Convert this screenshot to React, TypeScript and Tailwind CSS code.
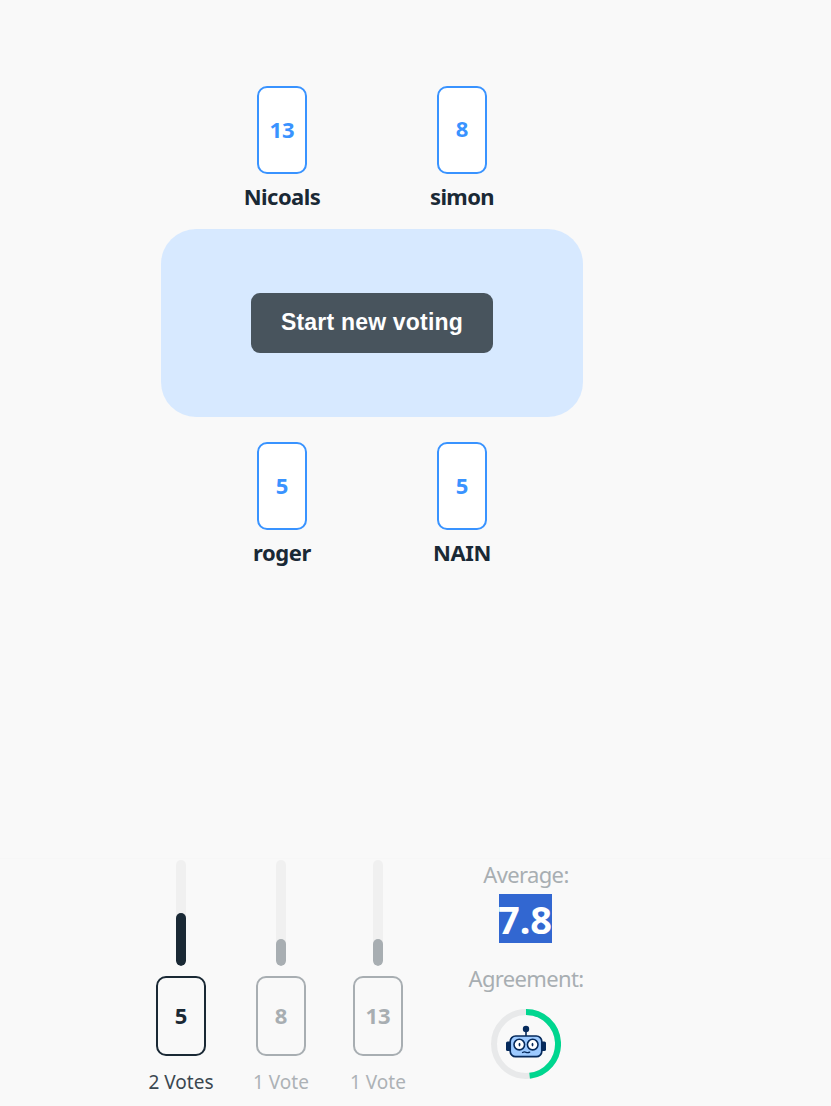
type Player = { name: string; vote: string; nameClass: string; voteClass?: string };
type Result = { vote: string; label: string; fill: string; tone: string; bar: string; width: string; text: string };

const topPlayers: Player[] = [
  { name: "Nicoals", vote: "13", nameClass: "tracking-[-0.55px]" },
  { name: "simon", vote: "8", nameClass: "tracking-[-0.6px]", voteClass: "pb-[4px]" },
];
const bottomPlayers: Player[] = [
  { name: "roger", vote: "5", nameClass: "tracking-[-0.4px]" },
  { name: "NAIN", vote: "5", nameClass: "tracking-[-0.35px]" },
];
const results: Result[] = [
  { vote: "5", label: "2 Votes", fill: "h-[53px]", tone: "border-[#1a2935] text-[#1a2935]", bar: "bg-[#1a2935]", width: "w-[100px]", text: "text-[#3a4750]" },
  { vote: "8", label: "1 Vote", fill: "h-[27px]", tone: "border-[#a8aeb2] text-[#a8aeb2]", bar: "bg-[#a8aeb2]", width: "w-[100px]", text: "text-[#adb2b6]" },
  { vote: "13", label: "1 Vote", fill: "h-[27px]", tone: "border-[#a8aeb2] text-[#a8aeb2]", bar: "bg-[#a8aeb2]", width: "w-[94px]", text: "text-[#adb2b6]" },
];

function PlayerCard({ name, vote, nameClass, voteClass = "pb-[2px]" }: Player) {
  return (
    <div className="flex w-[180px] flex-col items-center">
      <div className="flex h-[88px] w-[50px] items-center justify-center rounded-[10px] border-2 border-[#3993ff] bg-white text-[22px] font-bold text-[#3993ff]">
        <span className={voteClass}>{vote}</span>
      </div>
      <div className={"mt-[7px] mb-px text-[22px] leading-[30px] font-bold whitespace-nowrap text-[#1a2935] " + nameClass}>{name}</div>
    </div>
  );
}

function ResultColumn({ vote, label, fill, tone, bar, width, text }: Result) {
  return (
    <div className={"flex flex-col items-center " + width}>
      <div className="flex h-[106px] w-[10px] items-end overflow-hidden rounded-full bg-[#f0f0f0]">
        <div className={"w-full rounded-full " + fill + " " + bar} />
      </div>
      <div className={"mt-[10px] flex h-[80px] w-[50px] items-center justify-center rounded-[10px] border-2 pb-[2px] text-[22px] font-bold " + tone}>{vote}</div>
      <div className={"mt-[13px] text-[19px] leading-[26px] whitespace-nowrap " + text}>{label}</div>
    </div>
  );
}

function AgreementRing() {
  return (
    <svg className="mt-[16px] h-[70px] w-[70px] shrink-0" viewBox="0 0 70 70" fill="none">
      <circle cx="35" cy="35" r="32" stroke="#e8e9ea" strokeWidth="6" />
      <path d="M35 3A32 32 0 0 1 38.6 66.8" stroke="#00d68f" strokeWidth="6" />
      <path d="M35 21v6" stroke="#062a5c" strokeWidth="1.6" />
      <circle cx="35" cy="20" r="3.2" fill="#062a5c" />
      <rect x="15" y="32.5" width="5" height="9.5" rx="1.6" fill="#062a5c" />
      <rect x="50" y="32.5" width="5" height="9.5" rx="1.6" fill="#062a5c" />
      <rect x="19.2" y="27" width="31.6" height="20.7" rx="5.5" fill="#9dcaff" stroke="#062a5c" strokeWidth="1.7" />
      <circle cx="28.3" cy="35.6" r="5.3" fill="#fff" stroke="#062a5c" strokeWidth="1.6" />
      <circle cx="41.7" cy="35.6" r="5.3" fill="#fff" stroke="#062a5c" strokeWidth="1.6" />
      <ellipse cx="28.5" cy="35.6" rx="0.9" ry="1.9" fill="#062a5c" />
      <ellipse cx="41.5" cy="35.6" rx="0.9" ry="1.9" fill="#062a5c" />
      <path d="M31.5 43.5q1.8-1 3.6-.2t3.6-.2" stroke="#062a5c" strokeWidth="1.3" strokeLinecap="round" />
    </svg>
  );
}

export default function App() {
  return (
    <div className="flex h-[1106px] w-[831px] flex-col overflow-hidden bg-[#f9f9f9] font-['Noto_Sans',sans-serif]">
      <main className="flex h-[858px] w-[744px] shrink-0 flex-col items-center pt-[86px]">
        <div className="flex">
          {topPlayers.map((p) => <PlayerCard key={p.name} {...p} />)}
        </div>
        <div className="mt-[17px] flex h-[188px] w-[422px] shrink-0 items-center justify-center rounded-[35px] bg-[#d7e9ff]">
          <button className="h-[60px] w-[242px] rounded-[9px] bg-[#48545d] pb-[2px] font-['Liberation_Sans',sans-serif] text-[23px] font-bold tracking-[0.2px] whitespace-nowrap text-white">Start new voting</button>
        </div>
        <div className="mt-[25px] flex">
          {bottomPlayers.map((p) => <PlayerCard key={p.name} {...p} />)}
        </div>
      </main>
      <footer className="flex h-[248px] shrink-0 border-t border-[#f7f7f7] pt-px pl-[131px]">
        {results.map((r) => <ResultColumn key={r.vote} {...r} />)}
        <div className="-mt-px ml-[31px] flex w-[140px] flex-col items-center text-[22px] leading-[30px] text-[#a8aeb2]">
          <div className="tracking-[-0.65px]">Average:</div>
          <div className="mt-[5px] mr-[2px] flex h-[49px] w-[53px] items-center justify-center bg-[#3267d1] text-[38px] font-bold text-white">7.8</div>
          <div className="mt-[20px] tracking-[-0.65px]">Agreement:</div>
          <AgreementRing />
        </div>
      </footer>
    </div>
  );
}
